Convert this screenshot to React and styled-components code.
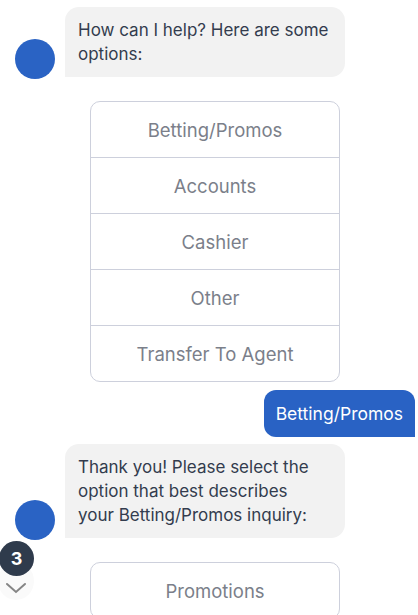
import React from "react";
import styled, { createGlobalStyle } from "styled-components";

const Global = createGlobalStyle`
  html, body { margin: 0; padding: 0; background: #ffffff; }
  body { font-family: "Inter", "Liberation Sans", sans-serif; overflow: hidden; }
`;

const Chat = styled.div`
  display: flex;
  flex-direction: column;
  padding: 7px 3px 0 15px;
  width: 418px;
  box-sizing: border-box;
`;

const BotRow = styled.div`
  display: flex;
  align-items: flex-end;
  gap: 10px;
  margin-top: ${(p) => p.$top || 0}px;
`;

const Avatar = styled.div`
  width: 40px;
  height: 40px;
  border-radius: 50%;
  background: #2a63c4;
  flex: none;
  margin-bottom: -2px;
`;

const Bubble = styled.div`
  width: 280px;
  box-sizing: border-box;
  background: #f2f2f2;
  color: #333c4e;
  font-size: 17px;
  line-height: 24px;
  padding: 11px 12px 11px 13px;
  border-radius: 14px 14px 14px 0;
`;

const Options = styled.div`
  margin: ${(p) => p.$top}px 0 0 75px;
  width: 250px;
  box-sizing: border-box;
  border: 1px solid #cdd0dc;
  border-radius: 10px;
  display: flex;
  flex-direction: column;
  overflow: hidden;
`;

const Option = styled.div`
  height: 55px;
  display: flex;
  align-items: center;
  justify-content: center;
  font-size: 18.5px;
  color: #7b7f8a;
  & + & { border-top: 1px solid #cdd0dc; }
`;

const UserRow = styled.div`
  display: flex;
  justify-content: flex-end;
  margin-top: 8px;
`;

const UserBubble = styled.div`
  background: #2962c4;
  color: #ffffff;
  font-size: 17.5px;
  line-height: 23px;
  padding: 12px 12px;
  border-radius: 12px 12px 0 12px;
`;

const ScrollButton = styled.div`
  position: fixed;
  left: -2px;
  top: 562px;
  width: 36px;
  height: 38px;
  border-radius: 50%;
  background: #fafafa;
  display: flex;
  align-items: flex-end;
  justify-content: center;
  padding-bottom: 6px;
  box-sizing: border-box;
`;

const Badge = styled.div`
  position: fixed;
  left: -1px;
  top: 541px;
  width: 35px;
  height: 35px;
  border-radius: 50%;
  background: #2f3b4c;
  color: #ffffff;
  font-weight: 700;
  font-size: 18px;
  display: flex;
  align-items: center;
  justify-content: center;
`;

export default function App() {
  return (
    <>
      <Global />
      <Chat>
        <BotRow>
          <Avatar />
          <Bubble>How can I help? Here are some options:</Bubble>
        </BotRow>
        <Options $top={24}>
          <Option>Betting/Promos</Option>
          <Option>Accounts</Option>
          <Option>Cashier</Option>
          <Option>Other</Option>
          <Option>Transfer To Agent</Option>
        </Options>
        <UserRow>
          <UserBubble>Betting/Promos</UserBubble>
        </UserRow>
        <BotRow $top={7}>
          <Avatar />
          <Bubble>
            Thank you! Please select the option that best describes
            <br />
            your Betting/Promos inquiry:
          </Bubble>
        </BotRow>
        <Options $top={24}>
          <Option>Promotions</Option>
        </Options>
      </Chat>
      <ScrollButton>
        <svg width="22" height="12" viewBox="0 0 22 12" fill="none">
          <path d="M2 2 L11 10 L20 2" stroke="#858585" strokeWidth="2" strokeLinecap="round" />
        </svg>
      </ScrollButton>
      <Badge>3</Badge>
    </>
  );
}
